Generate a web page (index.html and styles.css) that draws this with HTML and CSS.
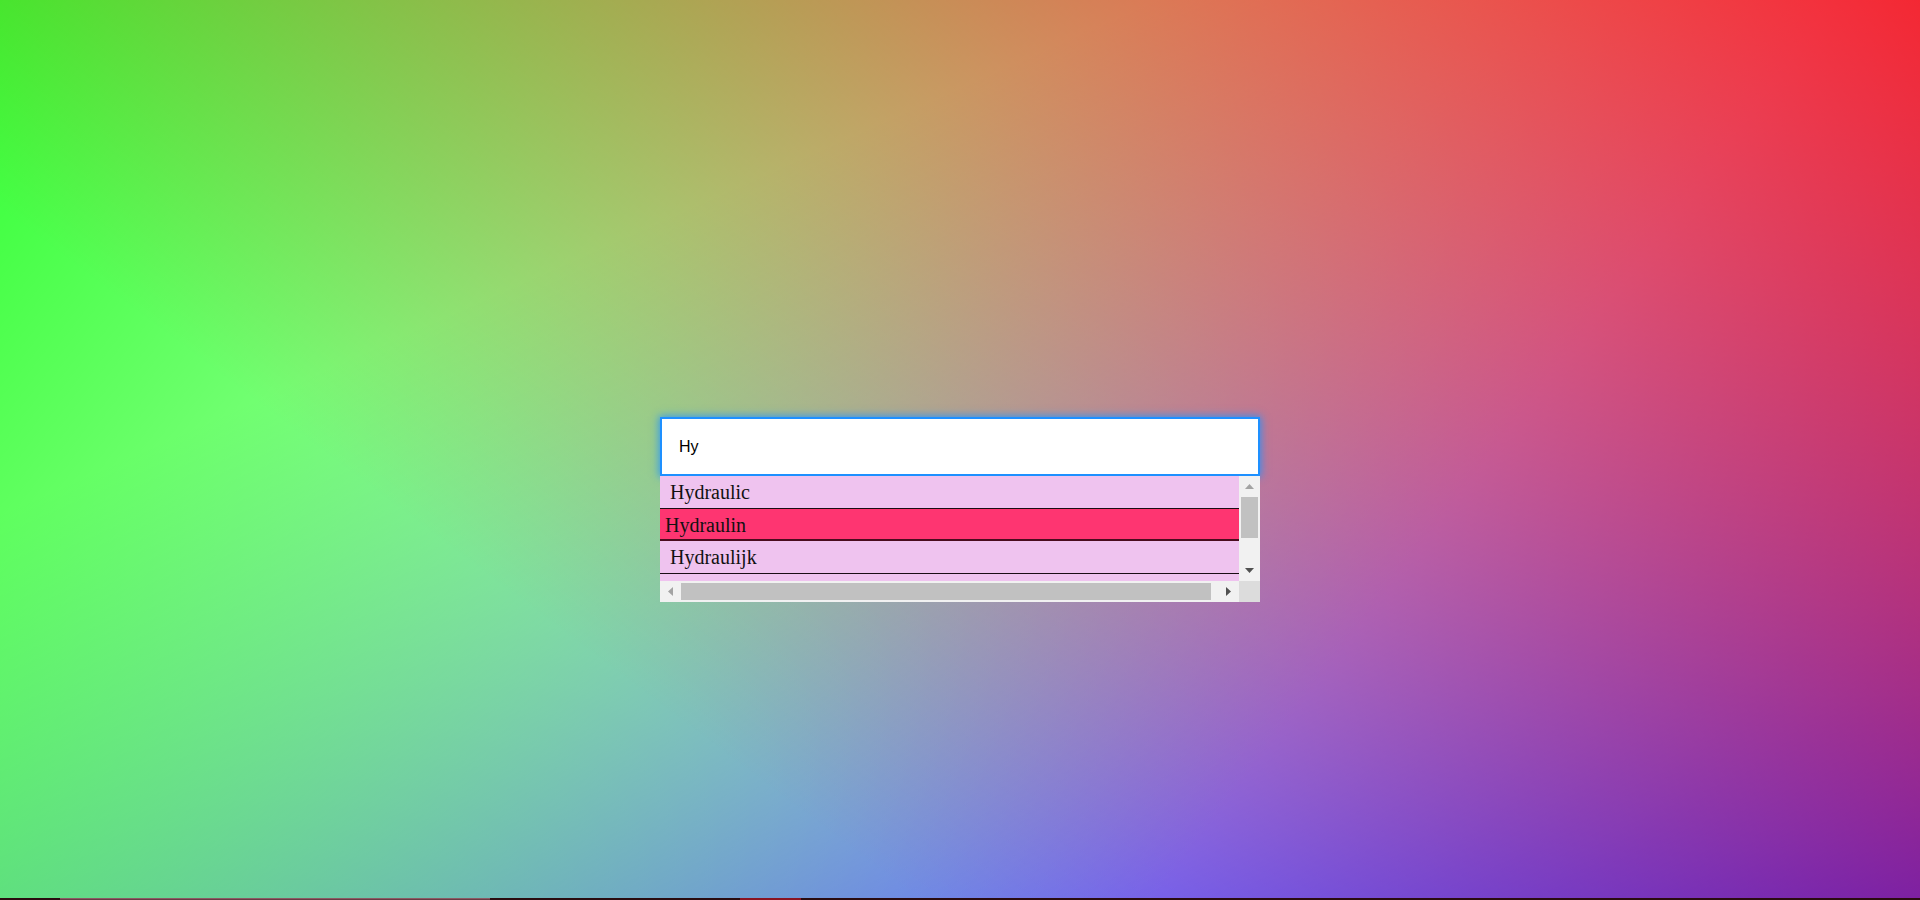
FILE: index.html
```html
<!DOCTYPE html>
<html lang="en">
<head>
<meta charset="utf-8">
<title>Autocomplete</title>
<link rel="stylesheet" href="styles.css">
</head>
<body>
<div class="page">
  <main class="stage">
    <div class="widget">
      <input class="search" type="text" value="Hy">
      <div class="list">
        <div class="viewport">
          <div class="items">
            <div class="item">Hydraulic</div>
            <div class="item item-active">Hydraulin</div>
            <div class="item">Hydraulijk</div>
            <div class="item">Hydraulisch</div>
            <div class="item">Hydraulique</div>
          </div>
        </div>
        <div class="vbar">
          <div class="sb-btn">
            <svg width="9" height="5" viewBox="0 0 9 5"><polygon points="4.5,0 9,5 0,5" fill="#a3a3a3"/></svg>
          </div>
          <div class="vtrack"><div class="vthumb"></div></div>
          <div class="sb-btn">
            <svg width="9" height="5" viewBox="0 0 9 5"><polygon points="0,0 9,0 4.5,5" fill="#505050"/></svg>
          </div>
        </div>
        <div class="hbar">
          <div class="sb-btn">
            <svg width="5" height="9" viewBox="0 0 5 9"><polygon points="5,0 5,9 0,4.5" fill="#a3a3a3"/></svg>
          </div>
          <div class="htrack"><div class="hthumb"></div></div>
          <div class="sb-btn">
            <svg width="5" height="9" viewBox="0 0 5 9"><polygon points="0,0 5,4.5 0,9" fill="#505050"/></svg>
          </div>
        </div>
        <div class="corner"></div>
      </div>
    </div>
  </main>
  <div class="strip">
    <span class="seg seg-a"></span>
    <span class="seg seg-b"></span>
    <span class="seg seg-c"></span>
    <span class="seg seg-d"></span>
    <span class="seg seg-e"></span>
  </div>
</div>
</body>
</html>
```

FILE: styles.css
```css
html, body {
  margin: 0;
  padding: 0;
}

body {
  width: 1920px;
  height: 900px;
  overflow: hidden;
  background: #fff;
}

.page {
  display: flex;
  flex-direction: column;
  height: 900px;
}

.stage {
  flex: 1;
  display: flex;
  justify-content: center;
  align-items: flex-start;
  padding-top: 417px;
  box-sizing: border-box;
  background:
    linear-gradient(217deg, rgba(255, 0, 0, 0.8), rgba(255, 0, 0, 0) 70.71%),
    linear-gradient(127deg, rgba(0, 255, 0, 0.8), rgba(0, 255, 0, 0) 70.71%),
    linear-gradient(336deg, rgba(0, 0, 255, 0.8), rgba(0, 0, 255, 0) 70.71%);
}

.widget {
  width: 600px;
  display: flex;
  flex-direction: column;
}

.search {
  box-sizing: border-box;
  width: 600px;
  height: 59px;
  margin: 0;
  padding: 0 17px;
  border: 2px solid #1e90ff;
  outline: none;
  background: #fff;
  color: #000;
  font-family: "Liberation Sans", Arial, sans-serif;
  font-size: 16px;
  box-shadow: 0 0 8px 1px rgba(30, 144, 255, 0.85);
}

.list {
  width: 600px;
  height: 126px;
  display: grid;
  grid-template-columns: 579px 21px;
  grid-template-rows: 105px 21px;
  background: #efc3ef;
}

.viewport {
  overflow: hidden;
  font-family: "Liberation Serif", "Times New Roman", serif;
  font-size: 20px;
  color: #111;
}

.items {
  width: 589px;
}

.item {
  padding: 5px 0 3.5px 10px;
  line-height: 23px;
  border-bottom: 1px solid #1a0d14;
  white-space: nowrap;
}

.item-active {
  padding-left: 5px;
  padding-bottom: 2.5px;
  background: #fe3571;
  border-bottom: 2px solid #4a0c1e;
}

/* scrollbars */
.vbar {
  display: flex;
  flex-direction: column;
  background: #f1f1f1;
}

.hbar {
  display: flex;
  background: #f1f1f1;
}

.sb-btn {
  flex: 0 0 21px;
  width: 21px;
  height: 21px;
  display: flex;
  align-items: center;
  justify-content: center;
}

.sb-btn svg {
  display: block;
}

.vtrack {
  flex: 1;
  padding: 0 2px;
}

.vthumb {
  height: 41px;
  background: #c1c1c1;
}

.htrack {
  flex: 1;
  padding: 2px 0;
}

.hthumb {
  width: 530px;
  height: 17px;
  background: #c1c1c1;
}

.corner {
  background: #dcdcdc;
}

/* bottom strip */
.strip {
  display: flex;
  height: 2px;
  background: #2a0c10;
}

.seg {
  display: block;
  height: 2px;
  box-sizing: border-box;
}

.seg-a { width: 60px; }
.seg-b { width: 430px; background: #6a3b44; border-top: 1px solid #8a5a64; }
.seg-c { width: 250px; }
.seg-d { width: 61px; background: #8a1422; }
.seg-e { flex: 1; }
```
